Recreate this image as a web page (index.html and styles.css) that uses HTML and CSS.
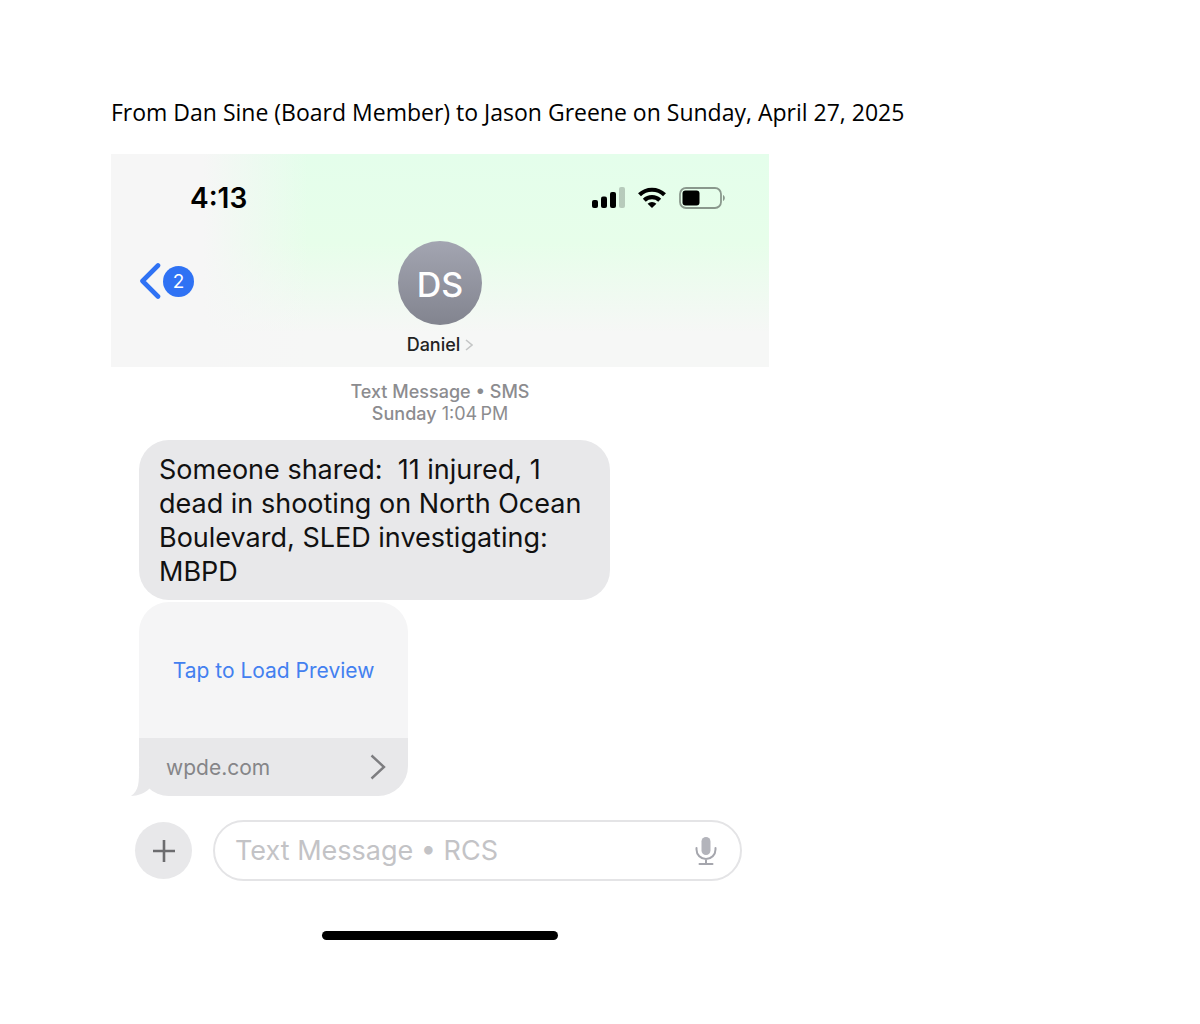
FILE: index.html
```
<!DOCTYPE html>
<html lang="en">
<head>
    <meta charset="UTF-8">
    <meta name="viewport" content="width=device-width, initial-scale=1.0">
    <title>Text Message - Daniel</title>
    <link rel="stylesheet" href="styles.css">
</head>
<body>
    <h1>From Dan Sine (Board Member) to Jason Greene on Sunday, April 27, 2025</h1>

    <main class="phone">
        <header class="top">
            <div class="status-bar">
                <span class="time">4:13</span>
                <div class="status-icons">
                    <svg width="33" height="22" viewBox="0 0 33 22" aria-label="Signal">
                        <rect x="0" y="13" width="6" height="8" rx="2"/>
                        <rect x="9" y="9.500" width="6" height="11.500" rx="2"/>
                        <rect x="18" y="5" width="6" height="16" rx="2"/>
                        <rect x="27" y="0" width="6" height="21" rx="2" opacity="0.2"/>
                    </svg>
                    <svg width="28" height="22" viewBox="0 0 28 22" aria-label="Wi-Fi">
                        <g fill="none" stroke="#000" stroke-width="4.2">
                            <path d="M1.5 7.8a18 18 0 0 1 25 0"/>
                            <path d="M6.3 13.2a11.2 11.2 0 0 1 15.4 0"/>
                        </g>
                        <path d="M14 21l-4.4-4.2a6.4 6.4 0 0 1 8.8 0z"/>
                    </svg>
                    <svg width="46" height="22" viewBox="0 0 46 22" aria-label="Battery">
                        <rect x="1" y="1" width="41" height="20" rx="6" fill="none" stroke="#000" stroke-opacity="0.4" stroke-width="1.8"/>
                        <rect x="3.5" y="3.5" width="17" height="15" rx="3"/>
                        <path d="M44 8c2.4 1 2.4 5 0 6z" opacity="0.4"/>
                    </svg>
                </div>
            </div>
            <nav class="nav">
                <button class="back" aria-label="Back, 2 unread">
                    <svg width="22" height="38" viewBox="0 0 22 38">
                        <path d="M19 3.5L3.5 19L19 34.5" fill="none" stroke="#2f72f4" stroke-width="4.6" stroke-linecap="round" stroke-linejoin="round"/>
                    </svg>
                    <span class="badge">2</span>
                </button>
                <button class="contact">
                    <span class="avatar">DS</span>
                    <span class="name">Daniel
                        <svg width="8" height="14" viewBox="0 0 8 14">
                            <path d="M1 2l6 5l-6 5" fill="none" stroke="#c4c6c6" stroke-width="1.6"/>
                        </svg>
                    </span>
                </button>
            </nav>
        </header>

        <section class="messages">
            <p class="stamp"><strong>Text Message • SMS</strong><br><strong>Sunday</strong> 1:04&#8201;PM</p>
            <p class="bubble">Someone shared:&nbsp; 11 injured, 1 dead in shooting on North Ocean Boulevard, SLED investigating: MBPD</p>
            <div class="link-card">
                <button class="load">Tap to Load Preview</button>
                <a class="site" href="#">wpde.com
                    <svg width="16" height="26" viewBox="0 0 16 26">
                        <path d="M1.5 1.5L14 13L1.5 24.5" fill="none" stroke="#7d7d80" stroke-width="2.4"/>
                    </svg>
                </a>
                <svg class="tail" width="26" height="28" viewBox="0 0 26 28">
                    <path d="M8 0C8 15 8 22 0 28C7 28 14 25 18 21L26 12V0z" fill="#e8e8ea"/>
                </svg>
            </div>
        </section>

        <form class="compose">
            <button class="plus" type="button" aria-label="Add">
                <svg width="22" height="22" viewBox="0 0 22 22">
                    <path d="M11 0v22M0 11h22" stroke="#6c6c6f" stroke-width="2.6"/>
                </svg>
            </button>
            <div class="field">
                <input type="text" placeholder="Text Message • RCS" aria-label="Message">
                <button class="mic" type="button" aria-label="Dictate">
                    <svg width="22" height="30" viewBox="0 0 22 30">
                        <rect x="6.5" y="1" width="9" height="18" rx="4.5" fill="#b3b4bb"/>
                        <path d="M1.5 12v1.5a9.5 9.5 0 0 0 19 0V12M11 23v5M4.5 28h13" fill="none" stroke="#a5a6ad" stroke-width="2" stroke-linecap="round"/>
                    </svg>
                </button>
            </div>
        </form>
        <div class="home-bar"></div>
    </main>
</body>
</html>
```
FILE: styles.css
```
* {
    box-sizing: border-box;
}

body {
    margin: 0;
    padding: 96px 111px 48px;
    background: #fff;
    color: #000;
    font-family: Inter, "Liberation Sans", sans-serif;
}

h1 {
    margin: 0 0 26px;
    font-family: "Open Sans", "Noto Sans", sans-serif;
    font-size: 23px;
    font-weight: 400;
    line-height: 32px;
}

p {
    margin: 0;
}

button {
    padding: 0;
    border: none;
    background: none;
    color: inherit;
    font: inherit;
    cursor: pointer;
}

svg {
    display: block;
    flex: none;
}

.phone {
    max-width: 658px;
}

/* Header */
.top {
    padding: 24px 0 11px;
    background:
        linear-gradient(to right, #f6f6f6 14%, rgba(246, 246, 246, 0) 30%),
        linear-gradient(to bottom, #e4feeb 0%, #e7feea 42%, #f6f7f6 84%);
}

.status-bar {
    display: flex;
    align-items: center;
    justify-content: space-between;
    height: 40px;
    padding: 0 44px 0 79px;
}

.time {
    font-size: 28px;
    font-weight: 600;
    line-height: 38px;
}

.status-icons {
    display: flex;
    gap: 13px;
}

.nav {
    display: grid;
    grid-template-columns: 1fr auto 1fr;
    margin-top: 23px;
}

.back {
    display: flex;
    align-items: center;
    justify-self: start;
    gap: 2px;
    height: 80px;
    margin-left: 28px;
}

.badge {
    width: 31px;
    border-radius: 50%;
    background: #2f72f4;
    color: #fff;
    font-size: 19px;
    line-height: 31px;
    text-align: center;
}

.contact {
    display: flex;
    flex-direction: column;
    align-items: center;
    gap: 9px;
}

.avatar {
    height: 84px;
    width: 84px;
    padding-top: 2px;
    border-radius: 50%;
    background: linear-gradient(#a3a5b1, #82848f);
    color: #fff;
    font-size: 34px;
    font-weight: 500;
    line-height: 84px;
}

.name {
    display: flex;
    align-items: center;
    gap: 5px;
    color: #222;
    font-size: 18px;
    font-weight: 500;
    line-height: 22px;
}

/* Messages */
.messages {
    padding: 14px 28px 0;
}

.stamp {
    color: #8c8c8f;
    font-size: 18px;
    line-height: 22px;
    text-align: center;
}

.stamp strong {
    font-weight: 500;
}

.bubble {
    max-width: 471px;
    margin: 15px 0 2px;
    padding: 13px 20px 11px;
    border-radius: 30px;
    background: #e8e8ea;
    color: #111;
    font-size: 27px;
    line-height: 34px;
}

.link-card {
    position: relative;
    display: flex;
    flex-direction: column;
    max-width: 269px;
}

.load {
    height: 136px;
    border-radius: 30px 30px 0 0;
    background: #f5f5f6;
    color: #4380f0;
    font-size: 21px;
}

.site {
    display: flex;
    align-items: center;
    justify-content: space-between;
    height: 58px;
    padding: 0 22px 0 27px;
    border-radius: 0 0 30px 30px;
    background: #e8e8ea;
    color: #858588;
    font-size: 21px;
    text-decoration: none;
}

.tail {
    position: absolute;
    bottom: 0;
    left: -8px;
}

/* Compose bar */
.compose {
    display: flex;
    align-items: center;
    gap: 21px;
    padding: 24px 27px 0 24px;
}

.plus {
    display: grid;
    flex: none;
    place-items: center;
    width: 57px;
    height: 57px;
    border-radius: 50%;
    background: #e8e8ea;
}

.field {
    display: flex;
    flex: 1;
    align-items: center;
    height: 61px;
    padding: 0 23px 0 20px;
    border: 2px solid #e4e4e6;
    border-radius: 31px;
}

.field input {
    flex: 1;
    min-width: 0;
    padding: 0;
    border: none;
    outline: none;
    background: none;
    font: inherit;
    font-size: 27px;
}

.field input::placeholder {
    color: #c3c3c6;
}

.home-bar {
    width: 36%;
    height: 9px;
    margin: 50px auto 0;
    border-radius: 5px;
    background: #000;
}
```
